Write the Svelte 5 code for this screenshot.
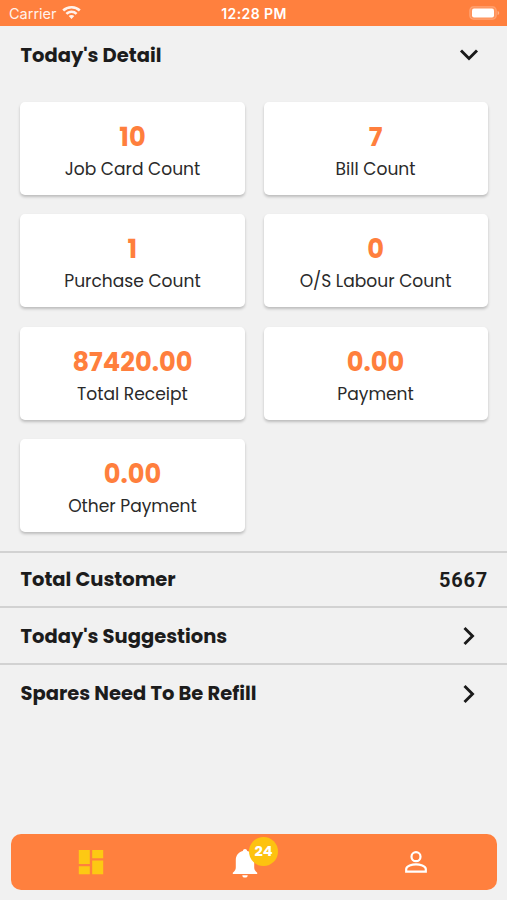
<script lang="ts">
  let detailOpen = $state(true)

  const stats = [
    { label: "Job Card Count",   value: "10"       },
    { label: "Bill Count",       value: "7"        },
    { label: "Purchase Count",   value: "1"        },
    { label: "O/S Labour Count", value: "0"        },
    { label: "Total Receipt",    value: "87420.00" },
    { label: "Payment",          value: "0.00"     },
    { label: "Other Payment",    value: "0.00"     },
  ]
</script>

<div class="screen">
  <header class="status">
    <div class="carrier">
      <span>Carrier</span>
      <svg width="19" height="14" viewBox="0 0 19 14" fill="#fff">
        <path d="M9.5 0C5.9 0 2.7 1.3 .3 3.6l1.8 1.9a10.5 10.5 0 0 1 14.8 0l1.8-1.9A13 13 0 0 0 9.5 0Z" />
        <path d="M9.5 4.5c-2.3 0-4.4.9-6 2.4l1.8 1.9a6.1 6.1 0 0 1 8.4 0l1.8-1.9a8.7 8.7 0 0 0-6-2.4Z" />
        <path d="M9.5 9c-1.1 0-2.1.4-2.8 1.1l2.8 3 2.8-3A4 4 0 0 0 9.5 9Z" />
      </svg>
    </div>
    <span class="time">12:28 PM</span>
    <svg class="battery" width="31" height="14" viewBox="0 0 31 14">
      <rect x=".7" y=".7" width="26.6" height="12.6" rx="3.8" fill="#fff" fill-opacity=".15" stroke="#fff" stroke-opacity=".2" stroke-width="1.2" />
      <rect x="3" y="2.6" width="22" height="8.8" rx="2" fill="#fff" />
      <path d="M28.6 5v4c1-.3 1.6-1.1 1.6-2s-.6-1.7-1.6-2Z" fill="#fff" fill-opacity=".4" />
    </svg>
  </header>

  <main>
    <button class="heading" onclick={() => (detailOpen = !detailOpen)}>
      <span>Today's Detail</span>
      <svg width="20" height="14" viewBox="0 0 20 14">
        <path d="M2 2.5 10 10.5 18 2.5" fill="none" stroke="#1a1a1a" stroke-width="2.9" />
      </svg>
    </button>

    {#if detailOpen}
      <section class="grid">
        {#each stats as stat}
          <div class="card">
            <strong>{stat.value}</strong>
            <span>{stat.label}</span>
          </div>
        {/each}
      </section>
    {/if}

    <div class="row customer">
      <span>Total Customer</span>
      <span class="total">5667</span>
    </div>
    <button class="row suggestions">
      <span>Today's Suggestions</span>
      <svg width="14" height="20" viewBox="0 0 14 20">
        <path d="M2.5 2 10.5 10 2.5 18" fill="none" stroke="#1a1a1a" stroke-width="2.9" />
      </svg>
    </button>
    <button class="row spares">
      <span>Spares Need To Be Refill</span>
      <svg width="14" height="20" viewBox="0 0 14 20">
        <path d="M2.5 2 10.5 10 2.5 18" fill="none" stroke="#1a1a1a" stroke-width="2.9" />
      </svg>
    </button>
  </main>

  <nav>
    <button aria-label="Dashboard">
      <svg width="26" height="26" viewBox="0 0 26 26" fill="#fdc913">
        <path d="M.8 1h11v14h-11ZM14.2 1h11v8.2h-11ZM.8 17.2h11v8h-11ZM14.2 11.4h11v13.8h-11Z" />
      </svg>
    </button>
    <button aria-label="Notifications">
      <span class="bell">
        <svg width="26" height="30" viewBox="0 0 26 30" fill="#fff">
          <path d="M13 1c-1.2 0-2 .8-2.2 1.9C6.4 4 3.8 7.4 3.8 12v7.2c0 2.4-1 4-3 5.500V26h24.400v-1.300c-2-1.500-3-3.100-3-5.500V12c0-4.600-2.600-8-7-9.100C15 1.800 14.200 1 13 1ZM10.300 27.200h5.400a2.700 2.400 0 0 1-5.400 0Z" />
        </svg>
        <span class="badge">24</span>
      </span>
    </button>
    <button aria-label="Profile">
      <svg width="24" height="24" viewBox="0 0 24 24" fill="none" stroke="#fff" stroke-width="2.2">
        <circle cx="12" cy="6.7" r="4.5" />
        <path d="M2.2 21.700v-2.600c0-3 6-4.800 9.800-4.800s9.800 1.800 9.800 4.800v2.600Z" />
      </svg>
    </button>
  </nav>
</div>

<style>
  :global(body) { margin: 0; background: #f1f1f1; }

  .screen {
    display: flex;
    flex-direction: column;
    width: 507px;
    height: 900px;
    overflow: hidden;
    background: #f1f1f1;
    color: #1c1c1c;
    font-family: Poppins, Inter, sans-serif;
  }

  button {
    padding: 0;
    border: 0;
    background: none;
    color: inherit;
    font-family: inherit;
  }

  svg { display: block; flex: none; }

  .status {
    display: grid;
    grid-template-columns: 1fr auto 1fr;
    align-items: center;
    box-sizing: border-box;
    height: 26px;
    padding: 0 7px 0 9px;
    background: #ff803e;
    color: #fff;
    font-family: Inter, sans-serif;
    font-size: 14.5px;
  }

  .carrier { display: flex; align-items: center; gap: 5px; opacity: 0.9; }
  .carrier span { padding-top: 1px; }
  .time { padding: 1px 1px 0 0; font-weight: 600; font-size: 14px; letter-spacing: 0.4px; }
  .battery { justify-self: end; }

  main { flex: 1; }

  .heading, .row {
    display: flex;
    align-items: center;
    justify-content: space-between;
    box-sizing: border-box;
    width: 100%;
    font-size: 19.5px;
    font-weight: 700;
  }

  .heading { height: 58px; padding: 0 28px 0 20.5px; }

  .grid {
    display: grid;
    grid-template-columns: 1fr 1fr;
    grid-auto-rows: 93px;
    gap: 19.4px 19px;
    padding: 18px 19.4px 18.8px 20.4px;
  }

  .card {
    display: flex;
    flex-direction: column;
    align-items: center;
    box-sizing: border-box;
    padding-top: 18px;
    border-radius: 5px;
    background: #fff;
    box-shadow: 0 2px 3px rgba(0, 0, 0, 0.22);
    white-space: nowrap;
  }

  .card strong {
    color: #ff7f3d;
    font-size: 25.7px;
    font-weight: 700;
    line-height: 34px;
  }

  .card span { font-size: 17.1px; line-height: 30px; color: #2a2a2a; }

  .row { border-top: 2px solid #d2d2d2; padding: 1px 31px 0 20.5px; }
  .customer { height: 55px; padding-right: 19px; }
  .suggestions { height: 57.5px; }
  .spares { height: 58px; }

  .total { font-family: Roboto, sans-serif; font-size: 20px; letter-spacing: 0.8px; }

  nav {
    display: grid;
    grid-template-columns: repeat(3, 1fr);
    height: 56px;
    margin: 0 10px 10px 11px;
    border-radius: 10px;
    background: #ff803e;
  }

  nav button { display: flex; align-items: center; justify-content: center; }
  nav button:first-child { padding-right: 2px; }

  .bell { position: relative; margin-right: 18px; padding-top: 1px; }

  .badge {
    position: absolute;
    top: -10px;
    right: -20px;
    width: 29px;
    height: 29px;
    border-radius: 50%;
    background: #fdc210;
    color: #fff;
    font-size: 14.5px;
    font-weight: 700;
    line-height: 28px;
    text-align: center;
  }
</style>
